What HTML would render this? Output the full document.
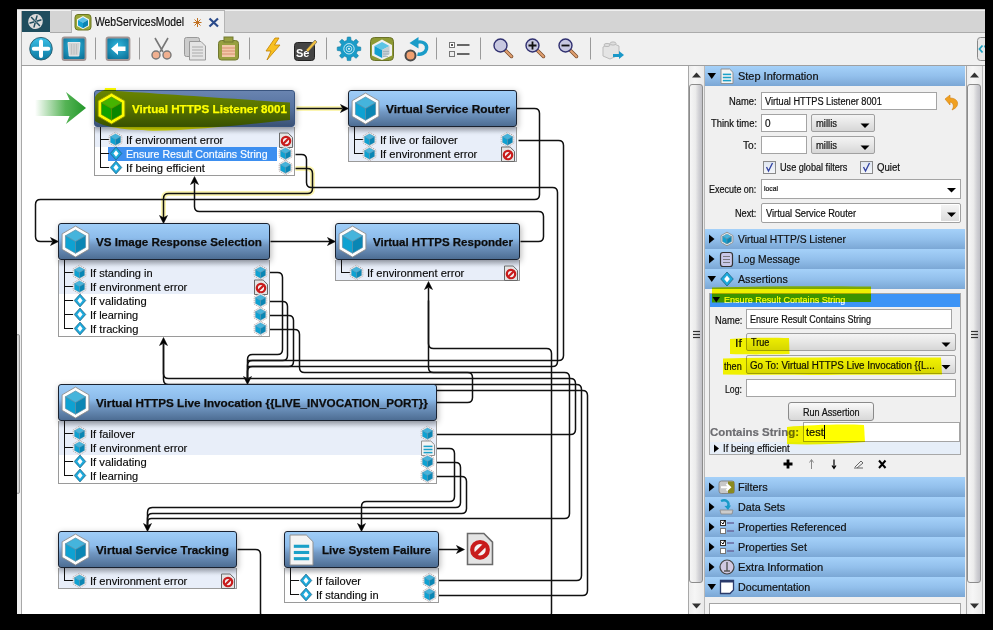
<!DOCTYPE html><html><head><meta charset="utf-8"><style>html,body{margin:0;padding:0;width:993px;height:630px;overflow:hidden;background:#000;}.a{position:absolute;}.t{position:absolute;white-space:nowrap;font-family:"Liberation Sans",sans-serif;transform-origin:0 50%;}#root{position:relative;width:993px;height:630px;overflow:hidden;background:#000;font-family:"Liberation Sans",sans-serif;}</style></head><body><div id="root">
<div class="a" style="left:17px;top:9px;width:968px;height:605px;background:#f0f0f0;border-top:1px solid #c4c4c4;box-sizing:border-box;"></div>
<div class="a" style="left:50px;top:11px;width:935px;height:22px;background:#d4d4d4;border-bottom:1px solid #ababab;box-sizing:border-box;"></div>
<div class="a" style="left:22px;top:11px;width:28px;height:21px;background:#1f4d5e;"></div>
<div class="a" style="left:21px;top:11px;width:1px;height:603px;background:#a8a8a8;"></div>
<div class="a" style="left:16px;top:334px;width:4px;height:160px;background:linear-gradient(90deg,#e4e4e4,#cfcfcf);border:1px solid #9a9a9a;border-radius:3px;box-sizing:border-box;"></div>
<div class="a" style="left:71px;top:10px;width:154px;height:23px;background:#f0f0f0;border:1px solid #b4b4b4;border-bottom:none;box-sizing:border-box;"></div>
<div class="a" style="left:21px;top:65px;width:964px;height:1px;background:#a0a0a0;"></div>
<div class="a" style="left:22px;top:66px;width:666px;height:548px;background:#fff;"></div>
<svg class="a" style="left:22px;top:66px" width="666" height="548" viewBox="22 66 666 548"><path d="M296.5,108.5 L342.5,108.5" fill="none" stroke="#fbf5b0" stroke-width="5" /><path d="M295.5,168.5 L307.50,168.50 Q312.5,168.5 312.50,173.50 L312.50,188.50 Q312.5,193.5 307.50,193.50 L168.50,193.50 Q163.5,193.5 163.50,198.50 L163.5,218.5" fill="none" stroke="#fbf5b0" stroke-width="5" /><path d="M295.5,154.5 L301.50,154.50 Q306.5,154.5 306.50,159.50 L306.50,182.50 Q306.5,187.5 311.50,187.50 L552.50,187.50 Q557.5,187.5 557.50,192.50 L557.50,361.50 Q557.5,366.5 552.50,366.50 L252.50,366.50 Q247.5,366.5 247.50,371.50 L247.5,380.5" fill="none" stroke="#111" stroke-width="1.5"/><polygon points="247.5,384.5 243.5,376.5 247.5,378.74 251.5,376.5" fill="#000" stroke="#000" stroke-width="0.5" stroke-linejoin="round"/><path d="M516.5,108.5 L534.50,108.50 Q539.5,108.5 539.50,113.50 L539.50,194.50 Q539.5,199.5 534.50,199.50 L40.50,199.50 Q35.5,199.5 35.50,204.50 L35.50,236.50 Q35.5,241.5 40.50,241.50 L52.5,241.5" fill="none" stroke="#111" stroke-width="1.5"/><polygon points="58.5,241.5 50.5,237.5 52.74,241.5 50.5,245.5" fill="#000" stroke="#000" stroke-width="0.5" stroke-linejoin="round"/><path d="M518.5,140.5 L558.50,140.50 Q563.5,140.5 563.50,145.50 L563.50,355.50 Q563.5,360.5 558.50,360.50 L252.50,360.50 Q247.5,360.5 247.50,365.50 L247.5,380.5" fill="none" stroke="#111" stroke-width="1.5"/><path d="M520.5,241.5 L538.50,241.50 Q543.5,241.5 543.50,236.50 L543.50,216.50 Q543.5,211.5 538.50,211.50 L199.50,211.50 Q194.5,211.5 194.50,206.50 L194.5,182.5" fill="none" stroke="#111" stroke-width="1.5"/><polygon points="194.5,176.5 190.5,184.5 194.5,182.26 198.5,184.5" fill="#000" stroke="#000" stroke-width="0.5" stroke-linejoin="round"/><path d="M270.5,241.5 L330.5,241.5" fill="none" stroke="#111" stroke-width="1.5"/><polygon points="335.5,241.5 327.5,237.5 329.74,241.5 327.5,245.5" fill="#000" stroke="#000" stroke-width="0.5" stroke-linejoin="round"/><path d="M268.5,272.5 L277.50,272.50 Q282.5,272.5 282.50,277.50 L282.50,349.50 Q282.5,354.5 277.50,354.50 L252.50,354.50 Q247.5,354.5 247.50,359.50 L247.5,380.5" fill="none" stroke="#111" stroke-width="1.5"/><path d="M268.5,301.5 L282.50,301.50 Q287.5,301.5 287.50,306.50 L287.50,355.50 Q287.5,360.5 282.50,360.50 L247.5,360.5" fill="none" stroke="#111" stroke-width="1.5"/><path d="M268.5,315.5 L288.50,315.50 Q293.5,315.5 293.50,320.50 L293.50,361.50 Q293.5,366.5 288.50,366.50 L247.5,366.5" fill="none" stroke="#111" stroke-width="1.5"/><path d="M268.5,329.5 L294.50,329.50 Q299.5,329.5 299.50,334.50 L299.50,367.50 Q299.5,372.5 304.50,372.50 L564.50,372.50 Q569.5,372.5 569.50,377.50 L569.50,513.50 Q569.5,518.5 564.50,518.50 L151.50,518.50 Q147.5,518.5 147.50,522.50 L147.5,526.5" fill="none" stroke="#111" stroke-width="1.5"/><polygon points="147.5,531.5 143.5,523.5 147.5,525.74 151.5,523.5" fill="#000" stroke="#000" stroke-width="0.5" stroke-linejoin="round"/><path d="M436.5,402.5 L467.50,402.50 Q472.5,402.5 472.50,397.50 L472.50,377.50 Q472.5,372.5 467.50,372.50 L433.50,372.50 Q428.5,372.5 428.50,367.50 L428.5,287.5" fill="none" stroke="#111" stroke-width="1.5"/><polygon points="428.5,281.5 424.5,289.5 428.5,287.26 432.5,289.5" fill="#000" stroke="#000" stroke-width="0.5" stroke-linejoin="round"/><path d="M237.5,549.5 L255.50,549.50 Q260.5,549.5 260.50,554.50 L260.50,612.50 Q260.5,617.5 265.50,617.50 L546.50,617.50 Q551.5,617.5 551.50,612.50 L551.50,353.50 Q551.5,348.5 546.50,348.50 L433.50,348.50 Q428.5,348.5 428.50,343.50 L428.5,300.5" fill="none" stroke="#111" stroke-width="1.5"/><path d="M436.5,434.5 L570.50,434.50 Q575.5,434.5 575.50,429.50 L575.50,383.50 Q575.5,378.5 570.50,378.50 L168.50,378.50 Q163.5,378.5 163.50,373.50 L163.5,343.5" fill="none" stroke="#111" stroke-width="1.5"/><polygon points="163.5,337.5 159.5,345.5 163.5,343.26 167.5,345.5" fill="#000" stroke="#000" stroke-width="0.5" stroke-linejoin="round"/><path d="M436.5,448.5 L449.50,448.50 Q454.5,448.5 454.50,453.50 L454.50,496.50 Q454.5,501.5 449.50,501.50 L366.50,501.50 Q361.5,501.5 361.50,506.50 L361.5,526.5" fill="none" stroke="#111" stroke-width="1.5"/><polygon points="361.5,531.5 357.5,523.5 361.5,525.74 365.5,523.5" fill="#000" stroke="#000" stroke-width="0.5" stroke-linejoin="round"/><path d="M436.5,462.5 L455.50,462.50 Q460.5,462.5 460.50,467.50 L460.50,502.50 Q460.5,507.5 455.50,507.50 L152.50,507.50 Q147.5,507.5 147.50,512.50 L147.5,526.5" fill="none" stroke="#111" stroke-width="1.5"/><path d="M436.5,476.5 L461.50,476.50 Q466.5,476.5 466.50,481.50 L466.50,508.50 Q466.5,513.5 461.50,513.50 L152.50,513.50 Q147.5,513.5 147.50,518.50 L147.5,526.5" fill="none" stroke="#111" stroke-width="1.5"/><path d="M438.5,580.5 L576.50,580.50 Q581.5,580.5 581.50,575.50 L581.50,389.50 Q581.5,384.5 576.50,384.50 L168.50,384.50 Q163.5,384.5 163.50,379.50 L163.5,343.5" fill="none" stroke="#111" stroke-width="1.5"/><path d="M438.5,595.5 L582.50,595.50 Q587.5,595.5 587.50,590.50 L587.50,395.50 Q587.5,390.5 582.50,390.50 L436.5,390.5" fill="none" stroke="#111" stroke-width="1.5"/><path d="M438.5,549.5 L458.5,549.5" fill="none" stroke="#111" stroke-width="1.5"/><polygon points="464.5,549.5 456.5,545.5 458.74,549.5 456.5,553.5" fill="#000" stroke="#000" stroke-width="0.5" stroke-linejoin="round"/><path d="M296.5,108.5 L342.5,108.5" fill="none" stroke="#111" stroke-width="1.5"/><polygon points="348.5,108.5 340.5,104.5 342.74,108.5 340.5,112.5" fill="#000" stroke="#000" stroke-width="0.5" stroke-linejoin="round"/><path d="M295.5,168.5 L307.50,168.50 Q312.5,168.5 312.50,173.50 L312.50,188.50 Q312.5,193.5 307.50,193.50 L168.50,193.50 Q163.5,193.5 163.50,198.50 L163.5,218.5" fill="none" stroke="#111" stroke-width="1.5"/><polygon points="163.5,223.5 159.5,215.5 163.5,217.74 167.5,215.5" fill="#000" stroke="#000" stroke-width="0.5" stroke-linejoin="round"/></svg>
<svg class="a" style="left:0;top:0" width="993" height="630"><defs><linearGradient id="ga" x1="0" x2="1"><stop offset="0" stop-color="#2aa02a" stop-opacity="0"/><stop offset="0.6" stop-color="#2aa02a" stop-opacity="0.8"/><stop offset="1" stop-color="#22962a"/></linearGradient></defs><polygon points="35,100 69.6,100 66,92 86,108 66,124 69.6,116 35,116" fill="url(#ga)"/></svg>
<div class="a" style="left:94px;top:127px;width:201px;height:49.0px;background:#fff;border:1px solid #9a9a9a;border-top:none;box-sizing:border-box;"></div>
<div class="a" style="left:95px;top:127px;width:199px;height:19.5px;background:#e8eef9;"></div>
<div class="a" style="left:95px;top:127px;width:199px;height:7px;background:linear-gradient(rgba(110,120,140,0.32),rgba(110,120,140,0));"></div>
<div class="a" style="left:94px;top:90px;width:201px;height:37px;background:linear-gradient(#6984b0 0%,#5874a2 45%,#3a5276 100%);border:1px solid #3a5580;border-radius:3px;box-sizing:border-box;box-shadow:1px 2px 6px rgba(0,0,0,0.3);"></div>
<div class="t" style="left:132px;top:101.90px;font-size:11.65px;line-height:13.40px;font-weight:bold;color:#fff;transform:scaleX(0.9989);-webkit-text-stroke:0.25px #fff;">Virtual HTTPS Listener 8001</div>
<div class="t" style="left:126px;top:133.78px;font-size:11px;line-height:12.65px;color:#0a0a0a;transform:scaleX(1.0138);-webkit-text-stroke:0.15px #0a0a0a;">If environment error</div>
<div class="a" style="left:108px;top:147.0px;width:169px;height:14px;background:#3d8ff0;"></div>
<div class="t" style="left:126px;top:147.78px;font-size:11px;line-height:12.65px;color:#fff;transform:scaleX(0.9610);-webkit-text-stroke:0.15px #fff;">Ensure Result Contains String</div>
<div class="t" style="left:126px;top:161.78px;font-size:11px;line-height:12.65px;color:#0a0a0a;transform:scaleX(1.0255);-webkit-text-stroke:0.15px #0a0a0a;">If being efficient</div>
<div class="a" style="left:348px;top:127px;width:169px;height:35.0px;background:#fff;border:1px solid #9a9a9a;border-top:none;box-sizing:border-box;"></div>
<div class="a" style="left:349px;top:127px;width:167px;height:19.5px;background:#e8eef9;"></div>
<div class="a" style="left:349px;top:146.5px;width:167px;height:14.0px;background:#e8eef9;"></div>
<div class="a" style="left:349px;top:127px;width:167px;height:7px;background:linear-gradient(rgba(110,120,140,0.32),rgba(110,120,140,0));"></div>
<div class="a" style="left:348px;top:90px;width:169px;height:37px;background:linear-gradient(#9fcdf7 0%,#8dbceb 40%,#7298c3 60%,#4d6d93 100%);border:1px solid #1a2230;border-radius:3px;box-sizing:border-box;box-shadow:1px 2px 6px rgba(0,0,0,0.3);"></div>
<div class="t" style="left:386px;top:101.90px;font-size:11.65px;line-height:13.40px;font-weight:bold;color:#0c0c0c;transform:scaleX(1.0205);-webkit-text-stroke:0.25px #0c0c0c;">Virtual Service Router</div>
<div class="t" style="left:380px;top:133.78px;font-size:11px;line-height:12.65px;color:#0a0a0a;transform:scaleX(1.0100);-webkit-text-stroke:0.15px #0a0a0a;">If live or failover</div>
<div class="t" style="left:380px;top:147.78px;font-size:11px;line-height:12.65px;color:#0a0a0a;transform:scaleX(1.0138);-webkit-text-stroke:0.15px #0a0a0a;">If environment error</div>
<div class="a" style="left:58px;top:260px;width:212px;height:77.0px;background:#fff;border:1px solid #9a9a9a;border-top:none;box-sizing:border-box;"></div>
<div class="a" style="left:59px;top:260px;width:210px;height:19.5px;background:#e8eef9;"></div>
<div class="a" style="left:59px;top:279.5px;width:210px;height:14.0px;background:#e8eef9;"></div>
<div class="a" style="left:59px;top:260px;width:210px;height:7px;background:linear-gradient(rgba(110,120,140,0.32),rgba(110,120,140,0));"></div>
<div class="a" style="left:58px;top:223px;width:212px;height:37px;background:linear-gradient(#9fcdf7 0%,#8dbceb 40%,#7298c3 60%,#4d6d93 100%);border:1px solid #1a2230;border-radius:3px;box-sizing:border-box;box-shadow:1px 2px 6px rgba(0,0,0,0.3);"></div>
<div class="t" style="left:96px;top:234.90px;font-size:11.65px;line-height:13.40px;font-weight:bold;color:#0c0c0c;transform:scaleX(0.9977);-webkit-text-stroke:0.25px #0c0c0c;">VS Image Response Selection</div>
<div class="t" style="left:90px;top:266.78px;font-size:11px;line-height:12.65px;color:#0a0a0a;transform:scaleX(1.0037);-webkit-text-stroke:0.15px #0a0a0a;">If standing in</div>
<div class="t" style="left:90px;top:280.78px;font-size:11px;line-height:12.65px;color:#0a0a0a;transform:scaleX(1.0138);-webkit-text-stroke:0.15px #0a0a0a;">If environment error</div>
<div class="t" style="left:90px;top:294.78px;font-size:11px;line-height:12.65px;color:#0a0a0a;transform:scaleX(1.0190);-webkit-text-stroke:0.15px #0a0a0a;">If validating</div>
<div class="t" style="left:90px;top:308.78px;font-size:11px;line-height:12.65px;color:#0a0a0a;transform:scaleX(0.9979);-webkit-text-stroke:0.15px #0a0a0a;">If learning</div>
<div class="t" style="left:90px;top:322.78px;font-size:11px;line-height:12.65px;color:#0a0a0a;transform:scaleX(1.0151);-webkit-text-stroke:0.15px #0a0a0a;">If tracking</div>
<div class="a" style="left:335px;top:260px;width:185px;height:21.0px;background:#fff;border:1px solid #9a9a9a;border-top:none;box-sizing:border-box;"></div>
<div class="a" style="left:336px;top:260px;width:183px;height:19.5px;background:#e8eef9;"></div>
<div class="a" style="left:336px;top:260px;width:183px;height:7px;background:linear-gradient(rgba(110,120,140,0.32),rgba(110,120,140,0));"></div>
<div class="a" style="left:335px;top:223px;width:185px;height:37px;background:linear-gradient(#9fcdf7 0%,#8dbceb 40%,#7298c3 60%,#4d6d93 100%);border:1px solid #1a2230;border-radius:3px;box-sizing:border-box;box-shadow:1px 2px 6px rgba(0,0,0,0.3);"></div>
<div class="t" style="left:373px;top:234.90px;font-size:11.65px;line-height:13.40px;font-weight:bold;color:#0c0c0c;transform:scaleX(0.9891);-webkit-text-stroke:0.25px #0c0c0c;">Virtual HTTPS Responder</div>
<div class="t" style="left:367px;top:266.78px;font-size:11px;line-height:12.65px;color:#0a0a0a;transform:scaleX(1.0138);-webkit-text-stroke:0.15px #0a0a0a;">If environment error</div>
<div class="a" style="left:58px;top:421px;width:379px;height:63.0px;background:#fff;border:1px solid #9a9a9a;border-top:none;box-sizing:border-box;"></div>
<div class="a" style="left:59px;top:421px;width:377px;height:19.5px;background:#e8eef9;"></div>
<div class="a" style="left:59px;top:440.5px;width:377px;height:14.0px;background:#e8eef9;"></div>
<div class="a" style="left:59px;top:421px;width:377px;height:7px;background:linear-gradient(rgba(110,120,140,0.32),rgba(110,120,140,0));"></div>
<div class="a" style="left:58px;top:384px;width:379px;height:37px;background:linear-gradient(#9fcdf7 0%,#8dbceb 40%,#7298c3 60%,#4d6d93 100%);border:1px solid #1a2230;border-radius:3px;box-sizing:border-box;box-shadow:1px 2px 6px rgba(0,0,0,0.3);"></div>
<div class="t" style="left:96px;top:395.90px;font-size:11.65px;line-height:13.40px;font-weight:bold;color:#0c0c0c;transform:scaleX(1.0050);-webkit-text-stroke:0.25px #0c0c0c;">Virtual HTTPS Live Invocation {{LIVE_INVOCATION_PORT}}</div>
<div class="t" style="left:90px;top:427.78px;font-size:11px;line-height:12.65px;color:#0a0a0a;transform:scaleX(1.0100);-webkit-text-stroke:0.15px #0a0a0a;">If failover</div>
<div class="t" style="left:90px;top:441.78px;font-size:11px;line-height:12.65px;color:#0a0a0a;transform:scaleX(1.0138);-webkit-text-stroke:0.15px #0a0a0a;">If environment error</div>
<div class="t" style="left:90px;top:455.78px;font-size:11px;line-height:12.65px;color:#0a0a0a;transform:scaleX(1.0190);-webkit-text-stroke:0.15px #0a0a0a;">If validating</div>
<div class="t" style="left:90px;top:469.78px;font-size:11px;line-height:12.65px;color:#0a0a0a;transform:scaleX(0.9979);-webkit-text-stroke:0.15px #0a0a0a;">If learning</div>
<div class="a" style="left:58px;top:568px;width:179px;height:21.0px;background:#fff;border:1px solid #9a9a9a;border-top:none;box-sizing:border-box;"></div>
<div class="a" style="left:59px;top:568px;width:177px;height:19.5px;background:#e8eef9;"></div>
<div class="a" style="left:59px;top:568px;width:177px;height:7px;background:linear-gradient(rgba(110,120,140,0.32),rgba(110,120,140,0));"></div>
<div class="a" style="left:58px;top:531px;width:179px;height:37px;background:linear-gradient(#9fcdf7 0%,#8dbceb 40%,#7298c3 60%,#4d6d93 100%);border:1px solid #1a2230;border-radius:3px;box-sizing:border-box;box-shadow:1px 2px 6px rgba(0,0,0,0.3);"></div>
<div class="t" style="left:96px;top:542.90px;font-size:11.65px;line-height:13.40px;font-weight:bold;color:#0c0c0c;transform:scaleX(1.0085);-webkit-text-stroke:0.25px #0c0c0c;">Virtual Service Tracking</div>
<div class="t" style="left:90px;top:574.77px;font-size:11px;line-height:12.65px;color:#0a0a0a;transform:scaleX(1.0138);-webkit-text-stroke:0.15px #0a0a0a;">If environment error</div>
<div class="a" style="left:284px;top:568px;width:155px;height:35.0px;background:#fff;border:1px solid #9a9a9a;border-top:none;box-sizing:border-box;"></div>
<div class="a" style="left:285px;top:568px;width:153px;height:7px;background:linear-gradient(rgba(110,120,140,0.32),rgba(110,120,140,0));"></div>
<div class="a" style="left:284px;top:531px;width:155px;height:37px;background:linear-gradient(#9fcdf7 0%,#8dbceb 40%,#7298c3 60%,#4d6d93 100%);border:1px solid #1a2230;border-radius:3px;box-sizing:border-box;box-shadow:1px 2px 6px rgba(0,0,0,0.3);"></div>
<div class="t" style="left:322px;top:542.90px;font-size:11.65px;line-height:13.40px;font-weight:bold;color:#0c0c0c;transform:scaleX(0.9961);-webkit-text-stroke:0.25px #0c0c0c;">Live System Failure</div>
<div class="t" style="left:316px;top:574.77px;font-size:11px;line-height:12.65px;color:#0a0a0a;transform:scaleX(1.0100);-webkit-text-stroke:0.15px #0a0a0a;">If failover</div>
<div class="t" style="left:316px;top:588.77px;font-size:11px;line-height:12.65px;color:#0a0a0a;transform:scaleX(1.0037);-webkit-text-stroke:0.15px #0a0a0a;">If standing in</div>
<svg class="a" style="left:0;top:0" width="993" height="630"><polygon points="111.50,93.10 124.90,100.85 124.90,116.35 111.50,124.10 98.10,116.35 98.10,100.85" fill="#fdfdfd" stroke="#8c8c8c" stroke-width="0.9"/><polygon points="111.50,96.97 121.55,102.79 111.50,108.60 101.45,102.79" fill="#45b4dc" stroke="#5a8ea8" stroke-width="0.7"/><polygon points="101.45,102.79 111.50,108.60 111.50,120.22 101.45,114.41" fill="#0ea2d2" stroke="#5a8ea8" stroke-width="0.7"/><polygon points="121.55,102.79 111.50,108.60 111.50,120.22 121.55,114.41" fill="#0a86b4" stroke="#5a8ea8" stroke-width="0.7"/><line x1="100.5" y1="127" x2="100.5" y2="168.0" stroke="#111" stroke-width="1"/><line x1="100.5" y1="139.5" x2="109" y2="139.5" stroke="#111" stroke-width="1"/><polygon points="115.50,132.22 121.80,135.86 121.80,143.14 115.50,146.78 109.20,143.14 109.20,135.86" fill="#fbfbfb" stroke="#a89898" stroke-width="0.8" stroke-dasharray="1.2 0.8"/><polygon points="115.50,133.67 120.54,136.59 115.50,139.50 110.46,136.59" fill="#45b4dc" stroke="#5a8ea8" stroke-width="0.4"/><polygon points="110.46,136.59 115.50,139.50 115.50,145.33 110.46,142.41" fill="#0ea2d2" stroke="#5a8ea8" stroke-width="0.4"/><polygon points="120.54,136.59 115.50,139.50 115.50,145.33 120.54,142.41" fill="#0a86b4" stroke="#5a8ea8" stroke-width="0.4"/><path d="M279.5,133.0 H288.1 L292.5,137.4 V147.5 H279.5 Z" fill="#e4e4e4" stroke="#6a6a6a" stroke-width="1.00"/><circle cx="286.0" cy="141.05" r="4.20" fill="#f4f4f4" stroke="#c81c1c" stroke-width="2.24"/><line x1="282.98" y1="144.07" x2="289.02" y2="138.03" stroke="#c81c1c" stroke-width="2.24"/><line x1="100.5" y1="153.5" x2="109" y2="153.5" stroke="#111" stroke-width="1"/><polygon points="116,147.1 121.76,153.5 116,159.9 110.24,153.5" fill="#1eaadc" stroke="#1a5a7a" stroke-width="0.7"/><polygon points="116,150.3 118.56,153.5 116,156.7 113.44,153.5" fill="#fff"/><polygon points="285.50,146.22 291.80,149.86 291.80,157.14 285.50,160.78 279.20,157.14 279.20,149.86" fill="#fbfbfb" stroke="#a89898" stroke-width="0.8" stroke-dasharray="1.2 0.8"/><polygon points="285.50,147.67 290.54,150.59 285.50,153.50 280.46,150.59" fill="#45b4dc" stroke="#5a8ea8" stroke-width="0.4"/><polygon points="280.46,150.59 285.50,153.50 285.50,159.33 280.46,156.41" fill="#0ea2d2" stroke="#5a8ea8" stroke-width="0.4"/><polygon points="290.54,150.59 285.50,153.50 285.50,159.33 290.54,156.41" fill="#0a86b4" stroke="#5a8ea8" stroke-width="0.4"/><line x1="100.5" y1="167.5" x2="109" y2="167.5" stroke="#111" stroke-width="1"/><polygon points="116,161.1 121.76,167.5 116,173.9 110.24,167.5" fill="#1eaadc" stroke="#1a5a7a" stroke-width="0.7"/><polygon points="116,164.3 118.56,167.5 116,170.7 113.44,167.5" fill="#fff"/><polygon points="285.50,160.22 291.80,163.86 291.80,171.14 285.50,174.78 279.20,171.14 279.20,163.86" fill="#fbfbfb" stroke="#a89898" stroke-width="0.8" stroke-dasharray="1.2 0.8"/><polygon points="285.50,161.67 290.54,164.59 285.50,167.50 280.46,164.59" fill="#45b4dc" stroke="#5a8ea8" stroke-width="0.4"/><polygon points="280.46,164.59 285.50,167.50 285.50,173.33 280.46,170.41" fill="#0ea2d2" stroke="#5a8ea8" stroke-width="0.4"/><polygon points="290.54,164.59 285.50,167.50 285.50,173.33 290.54,170.41" fill="#0a86b4" stroke="#5a8ea8" stroke-width="0.4"/><polygon points="365.50,93.10 378.90,100.85 378.90,116.35 365.50,124.10 352.10,116.35 352.10,100.85" fill="#fdfdfd" stroke="#8c8c8c" stroke-width="0.9"/><polygon points="365.50,96.97 375.55,102.79 365.50,108.60 355.45,102.79" fill="#45b4dc" stroke="#5a8ea8" stroke-width="0.7"/><polygon points="355.45,102.79 365.50,108.60 365.50,120.22 355.45,114.41" fill="#0ea2d2" stroke="#5a8ea8" stroke-width="0.7"/><polygon points="375.55,102.79 365.50,108.60 365.50,120.22 375.55,114.41" fill="#0a86b4" stroke="#5a8ea8" stroke-width="0.7"/><line x1="354.5" y1="127" x2="354.5" y2="154.0" stroke="#111" stroke-width="1"/><line x1="354.5" y1="139.5" x2="363" y2="139.5" stroke="#111" stroke-width="1"/><polygon points="369.50,132.22 375.80,135.86 375.80,143.14 369.50,146.78 363.20,143.14 363.20,135.86" fill="#fbfbfb" stroke="#a89898" stroke-width="0.8" stroke-dasharray="1.2 0.8"/><polygon points="369.50,133.67 374.54,136.59 369.50,139.50 364.46,136.59" fill="#45b4dc" stroke="#5a8ea8" stroke-width="0.4"/><polygon points="364.46,136.59 369.50,139.50 369.50,145.33 364.46,142.41" fill="#0ea2d2" stroke="#5a8ea8" stroke-width="0.4"/><polygon points="374.54,136.59 369.50,139.50 369.50,145.33 374.54,142.41" fill="#0a86b4" stroke="#5a8ea8" stroke-width="0.4"/><polygon points="507.50,132.22 513.80,135.86 513.80,143.14 507.50,146.78 501.20,143.14 501.20,135.86" fill="#fbfbfb" stroke="#a89898" stroke-width="0.8" stroke-dasharray="1.2 0.8"/><polygon points="507.50,133.67 512.54,136.59 507.50,139.50 502.46,136.59" fill="#45b4dc" stroke="#5a8ea8" stroke-width="0.4"/><polygon points="502.46,136.59 507.50,139.50 507.50,145.33 502.46,142.41" fill="#0ea2d2" stroke="#5a8ea8" stroke-width="0.4"/><polygon points="512.54,136.59 507.50,139.50 507.50,145.33 512.54,142.41" fill="#0a86b4" stroke="#5a8ea8" stroke-width="0.4"/><line x1="354.5" y1="153.5" x2="363" y2="153.5" stroke="#111" stroke-width="1"/><polygon points="369.50,146.22 375.80,149.86 375.80,157.14 369.50,160.78 363.20,157.14 363.20,149.86" fill="#fbfbfb" stroke="#a89898" stroke-width="0.8" stroke-dasharray="1.2 0.8"/><polygon points="369.50,147.67 374.54,150.59 369.50,153.50 364.46,150.59" fill="#45b4dc" stroke="#5a8ea8" stroke-width="0.4"/><polygon points="364.46,150.59 369.50,153.50 369.50,159.33 364.46,156.41" fill="#0ea2d2" stroke="#5a8ea8" stroke-width="0.4"/><polygon points="374.54,150.59 369.50,153.50 369.50,159.33 374.54,156.41" fill="#0a86b4" stroke="#5a8ea8" stroke-width="0.4"/><path d="M501.5,147.0 H510.1 L514.5,151.4 V161.5 H501.5 Z" fill="#e4e4e4" stroke="#6a6a6a" stroke-width="1.00"/><circle cx="508.0" cy="155.05" r="4.20" fill="#f4f4f4" stroke="#c81c1c" stroke-width="2.24"/><line x1="504.98" y1="158.07" x2="511.02" y2="152.03" stroke="#c81c1c" stroke-width="2.24"/><polygon points="75.50,226.10 88.90,233.85 88.90,249.35 75.50,257.10 62.10,249.35 62.10,233.85" fill="#fdfdfd" stroke="#8c8c8c" stroke-width="0.9"/><polygon points="75.50,229.97 85.55,235.79 75.50,241.60 65.45,235.79" fill="#45b4dc" stroke="#5a8ea8" stroke-width="0.7"/><polygon points="65.45,235.79 75.50,241.60 75.50,253.22 65.45,247.41" fill="#0ea2d2" stroke="#5a8ea8" stroke-width="0.7"/><polygon points="85.55,235.79 75.50,241.60 75.50,253.22 85.55,247.41" fill="#0a86b4" stroke="#5a8ea8" stroke-width="0.7"/><line x1="64.5" y1="260" x2="64.5" y2="329.0" stroke="#111" stroke-width="1"/><line x1="64.5" y1="272.5" x2="73" y2="272.5" stroke="#111" stroke-width="1"/><polygon points="79.50,265.21 85.80,268.86 85.80,276.14 79.50,279.79 73.20,276.14 73.20,268.86" fill="#fbfbfb" stroke="#a89898" stroke-width="0.8" stroke-dasharray="1.2 0.8"/><polygon points="79.50,266.67 84.54,269.59 79.50,272.50 74.46,269.59" fill="#45b4dc" stroke="#5a8ea8" stroke-width="0.4"/><polygon points="74.46,269.59 79.50,272.50 79.50,278.33 74.46,275.41" fill="#0ea2d2" stroke="#5a8ea8" stroke-width="0.4"/><polygon points="84.54,269.59 79.50,272.50 79.50,278.33 84.54,275.41" fill="#0a86b4" stroke="#5a8ea8" stroke-width="0.4"/><polygon points="260.50,265.21 266.80,268.86 266.80,276.14 260.50,279.79 254.20,276.14 254.20,268.86" fill="#fbfbfb" stroke="#a89898" stroke-width="0.8" stroke-dasharray="1.2 0.8"/><polygon points="260.50,266.67 265.54,269.59 260.50,272.50 255.46,269.59" fill="#45b4dc" stroke="#5a8ea8" stroke-width="0.4"/><polygon points="255.46,269.59 260.50,272.50 260.50,278.33 255.46,275.41" fill="#0ea2d2" stroke="#5a8ea8" stroke-width="0.4"/><polygon points="265.54,269.59 260.50,272.50 260.50,278.33 265.54,275.41" fill="#0a86b4" stroke="#5a8ea8" stroke-width="0.4"/><line x1="64.5" y1="286.5" x2="73" y2="286.5" stroke="#111" stroke-width="1"/><polygon points="79.50,279.21 85.80,282.86 85.80,290.14 79.50,293.79 73.20,290.14 73.20,282.86" fill="#fbfbfb" stroke="#a89898" stroke-width="0.8" stroke-dasharray="1.2 0.8"/><polygon points="79.50,280.67 84.54,283.59 79.50,286.50 74.46,283.59" fill="#45b4dc" stroke="#5a8ea8" stroke-width="0.4"/><polygon points="74.46,283.59 79.50,286.50 79.50,292.33 74.46,289.41" fill="#0ea2d2" stroke="#5a8ea8" stroke-width="0.4"/><polygon points="84.54,283.59 79.50,286.50 79.50,292.33 84.54,289.41" fill="#0a86b4" stroke="#5a8ea8" stroke-width="0.4"/><path d="M254.5,280.0 H263.1 L267.5,284.4 V294.5 H254.5 Z" fill="#e4e4e4" stroke="#6a6a6a" stroke-width="1.00"/><circle cx="261.0" cy="288.05" r="4.20" fill="#f4f4f4" stroke="#c81c1c" stroke-width="2.24"/><line x1="257.98" y1="291.07" x2="264.02" y2="285.03" stroke="#c81c1c" stroke-width="2.24"/><line x1="64.5" y1="300.5" x2="73" y2="300.5" stroke="#111" stroke-width="1"/><polygon points="80,294.1 85.76,300.5 80,306.9 74.24,300.5" fill="#1eaadc" stroke="#1a5a7a" stroke-width="0.7"/><polygon points="80,297.3 82.56,300.5 80,303.7 77.44,300.5" fill="#fff"/><polygon points="260.50,293.21 266.80,296.86 266.80,304.14 260.50,307.79 254.20,304.14 254.20,296.86" fill="#fbfbfb" stroke="#a89898" stroke-width="0.8" stroke-dasharray="1.2 0.8"/><polygon points="260.50,294.67 265.54,297.59 260.50,300.50 255.46,297.59" fill="#45b4dc" stroke="#5a8ea8" stroke-width="0.4"/><polygon points="255.46,297.59 260.50,300.50 260.50,306.33 255.46,303.41" fill="#0ea2d2" stroke="#5a8ea8" stroke-width="0.4"/><polygon points="265.54,297.59 260.50,300.50 260.50,306.33 265.54,303.41" fill="#0a86b4" stroke="#5a8ea8" stroke-width="0.4"/><line x1="64.5" y1="314.5" x2="73" y2="314.5" stroke="#111" stroke-width="1"/><polygon points="80,308.1 85.76,314.5 80,320.9 74.24,314.5" fill="#1eaadc" stroke="#1a5a7a" stroke-width="0.7"/><polygon points="80,311.3 82.56,314.5 80,317.7 77.44,314.5" fill="#fff"/><polygon points="260.50,307.21 266.80,310.86 266.80,318.14 260.50,321.79 254.20,318.14 254.20,310.86" fill="#fbfbfb" stroke="#a89898" stroke-width="0.8" stroke-dasharray="1.2 0.8"/><polygon points="260.50,308.67 265.54,311.59 260.50,314.50 255.46,311.59" fill="#45b4dc" stroke="#5a8ea8" stroke-width="0.4"/><polygon points="255.46,311.59 260.50,314.50 260.50,320.33 255.46,317.41" fill="#0ea2d2" stroke="#5a8ea8" stroke-width="0.4"/><polygon points="265.54,311.59 260.50,314.50 260.50,320.33 265.54,317.41" fill="#0a86b4" stroke="#5a8ea8" stroke-width="0.4"/><line x1="64.5" y1="328.5" x2="73" y2="328.5" stroke="#111" stroke-width="1"/><polygon points="80,322.1 85.76,328.5 80,334.9 74.24,328.5" fill="#1eaadc" stroke="#1a5a7a" stroke-width="0.7"/><polygon points="80,325.3 82.56,328.5 80,331.7 77.44,328.5" fill="#fff"/><polygon points="260.50,321.21 266.80,324.86 266.80,332.14 260.50,335.79 254.20,332.14 254.20,324.86" fill="#fbfbfb" stroke="#a89898" stroke-width="0.8" stroke-dasharray="1.2 0.8"/><polygon points="260.50,322.67 265.54,325.59 260.50,328.50 255.46,325.59" fill="#45b4dc" stroke="#5a8ea8" stroke-width="0.4"/><polygon points="255.46,325.59 260.50,328.50 260.50,334.33 255.46,331.41" fill="#0ea2d2" stroke="#5a8ea8" stroke-width="0.4"/><polygon points="265.54,325.59 260.50,328.50 260.50,334.33 265.54,331.41" fill="#0a86b4" stroke="#5a8ea8" stroke-width="0.4"/><polygon points="352.50,226.10 365.90,233.85 365.90,249.35 352.50,257.10 339.10,249.35 339.10,233.85" fill="#fdfdfd" stroke="#8c8c8c" stroke-width="0.9"/><polygon points="352.50,229.97 362.55,235.79 352.50,241.60 342.45,235.79" fill="#45b4dc" stroke="#5a8ea8" stroke-width="0.7"/><polygon points="342.45,235.79 352.50,241.60 352.50,253.22 342.45,247.41" fill="#0ea2d2" stroke="#5a8ea8" stroke-width="0.7"/><polygon points="362.55,235.79 352.50,241.60 352.50,253.22 362.55,247.41" fill="#0a86b4" stroke="#5a8ea8" stroke-width="0.7"/><line x1="341.5" y1="260" x2="341.5" y2="273.0" stroke="#111" stroke-width="1"/><line x1="341.5" y1="272.5" x2="350" y2="272.5" stroke="#111" stroke-width="1"/><polygon points="356.50,265.21 362.80,268.86 362.80,276.14 356.50,279.79 350.20,276.14 350.20,268.86" fill="#fbfbfb" stroke="#a89898" stroke-width="0.8" stroke-dasharray="1.2 0.8"/><polygon points="356.50,266.67 361.54,269.59 356.50,272.50 351.46,269.59" fill="#45b4dc" stroke="#5a8ea8" stroke-width="0.4"/><polygon points="351.46,269.59 356.50,272.50 356.50,278.33 351.46,275.41" fill="#0ea2d2" stroke="#5a8ea8" stroke-width="0.4"/><polygon points="361.54,269.59 356.50,272.50 356.50,278.33 361.54,275.41" fill="#0a86b4" stroke="#5a8ea8" stroke-width="0.4"/><path d="M504.5,266.0 H513.1 L517.5,270.4 V280.5 H504.5 Z" fill="#e4e4e4" stroke="#6a6a6a" stroke-width="1.00"/><circle cx="511.0" cy="274.05" r="4.20" fill="#f4f4f4" stroke="#c81c1c" stroke-width="2.24"/><line x1="507.98" y1="277.07" x2="514.02" y2="271.03" stroke="#c81c1c" stroke-width="2.24"/><polygon points="75.50,387.10 88.90,394.85 88.90,410.35 75.50,418.10 62.10,410.35 62.10,394.85" fill="#fdfdfd" stroke="#8c8c8c" stroke-width="0.9"/><polygon points="75.50,390.98 85.55,396.79 75.50,402.60 65.45,396.79" fill="#45b4dc" stroke="#5a8ea8" stroke-width="0.7"/><polygon points="65.45,396.79 75.50,402.60 75.50,414.23 65.45,408.41" fill="#0ea2d2" stroke="#5a8ea8" stroke-width="0.7"/><polygon points="85.55,396.79 75.50,402.60 75.50,414.23 85.55,408.41" fill="#0a86b4" stroke="#5a8ea8" stroke-width="0.7"/><line x1="64.5" y1="421" x2="64.5" y2="476.0" stroke="#111" stroke-width="1"/><line x1="64.5" y1="433.5" x2="73" y2="433.5" stroke="#111" stroke-width="1"/><polygon points="79.50,426.21 85.80,429.86 85.80,437.14 79.50,440.79 73.20,437.14 73.20,429.86" fill="#fbfbfb" stroke="#a89898" stroke-width="0.8" stroke-dasharray="1.2 0.8"/><polygon points="79.50,427.67 84.54,430.59 79.50,433.50 74.46,430.59" fill="#45b4dc" stroke="#5a8ea8" stroke-width="0.4"/><polygon points="74.46,430.59 79.50,433.50 79.50,439.33 74.46,436.41" fill="#0ea2d2" stroke="#5a8ea8" stroke-width="0.4"/><polygon points="84.54,430.59 79.50,433.50 79.50,439.33 84.54,436.41" fill="#0a86b4" stroke="#5a8ea8" stroke-width="0.4"/><polygon points="427.50,426.21 433.80,429.86 433.80,437.14 427.50,440.79 421.20,437.14 421.20,429.86" fill="#fbfbfb" stroke="#a89898" stroke-width="0.8" stroke-dasharray="1.2 0.8"/><polygon points="427.50,427.67 432.54,430.59 427.50,433.50 422.46,430.59" fill="#45b4dc" stroke="#5a8ea8" stroke-width="0.4"/><polygon points="422.46,430.59 427.50,433.50 427.50,439.33 422.46,436.41" fill="#0ea2d2" stroke="#5a8ea8" stroke-width="0.4"/><polygon points="432.54,430.59 427.50,433.50 427.50,439.33 432.54,436.41" fill="#0a86b4" stroke="#5a8ea8" stroke-width="0.4"/><line x1="64.5" y1="447.5" x2="73" y2="447.5" stroke="#111" stroke-width="1"/><polygon points="79.50,440.21 85.80,443.86 85.80,451.14 79.50,454.79 73.20,451.14 73.20,443.86" fill="#fbfbfb" stroke="#a89898" stroke-width="0.8" stroke-dasharray="1.2 0.8"/><polygon points="79.50,441.67 84.54,444.59 79.50,447.50 74.46,444.59" fill="#45b4dc" stroke="#5a8ea8" stroke-width="0.4"/><polygon points="74.46,444.59 79.50,447.50 79.50,453.33 74.46,450.41" fill="#0ea2d2" stroke="#5a8ea8" stroke-width="0.4"/><polygon points="84.54,444.59 79.50,447.50 79.50,453.33 84.54,450.41" fill="#0a86b4" stroke="#5a8ea8" stroke-width="0.4"/><path d="M421.5,441.0 H430.8 L434.5,444.7 V455.5 H421.5 Z" fill="#f4f4f4" stroke="#909090" stroke-width="1"/><line x1="423.52" y1="446.39" x2="432.48" y2="446.39" stroke="#1aa0c8" stroke-width="1.55"/><line x1="423.52" y1="449.49" x2="432.48" y2="449.49" stroke="#1aa0c8" stroke-width="1.55"/><line x1="423.52" y1="452.59" x2="432.48" y2="452.59" stroke="#1aa0c8" stroke-width="1.55"/><line x1="64.5" y1="461.5" x2="73" y2="461.5" stroke="#111" stroke-width="1"/><polygon points="80,455.1 85.76,461.5 80,467.9 74.24,461.5" fill="#1eaadc" stroke="#1a5a7a" stroke-width="0.7"/><polygon points="80,458.3 82.56,461.5 80,464.7 77.44,461.5" fill="#fff"/><polygon points="427.50,454.21 433.80,457.86 433.80,465.14 427.50,468.79 421.20,465.14 421.20,457.86" fill="#fbfbfb" stroke="#a89898" stroke-width="0.8" stroke-dasharray="1.2 0.8"/><polygon points="427.50,455.67 432.54,458.59 427.50,461.50 422.46,458.59" fill="#45b4dc" stroke="#5a8ea8" stroke-width="0.4"/><polygon points="422.46,458.59 427.50,461.50 427.50,467.33 422.46,464.41" fill="#0ea2d2" stroke="#5a8ea8" stroke-width="0.4"/><polygon points="432.54,458.59 427.50,461.50 427.50,467.33 432.54,464.41" fill="#0a86b4" stroke="#5a8ea8" stroke-width="0.4"/><line x1="64.5" y1="475.5" x2="73" y2="475.5" stroke="#111" stroke-width="1"/><polygon points="80,469.1 85.76,475.5 80,481.9 74.24,475.5" fill="#1eaadc" stroke="#1a5a7a" stroke-width="0.7"/><polygon points="80,472.3 82.56,475.5 80,478.7 77.44,475.5" fill="#fff"/><polygon points="427.50,468.21 433.80,471.86 433.80,479.14 427.50,482.79 421.20,479.14 421.20,471.86" fill="#fbfbfb" stroke="#a89898" stroke-width="0.8" stroke-dasharray="1.2 0.8"/><polygon points="427.50,469.67 432.54,472.59 427.50,475.50 422.46,472.59" fill="#45b4dc" stroke="#5a8ea8" stroke-width="0.4"/><polygon points="422.46,472.59 427.50,475.50 427.50,481.33 422.46,478.41" fill="#0ea2d2" stroke="#5a8ea8" stroke-width="0.4"/><polygon points="432.54,472.59 427.50,475.50 427.50,481.33 432.54,478.41" fill="#0a86b4" stroke="#5a8ea8" stroke-width="0.4"/><polygon points="75.50,534.10 88.90,541.85 88.90,557.35 75.50,565.10 62.10,557.35 62.10,541.85" fill="#fdfdfd" stroke="#8c8c8c" stroke-width="0.9"/><polygon points="75.50,537.98 85.55,543.79 75.50,549.60 65.45,543.79" fill="#45b4dc" stroke="#5a8ea8" stroke-width="0.7"/><polygon points="65.45,543.79 75.50,549.60 75.50,561.23 65.45,555.41" fill="#0ea2d2" stroke="#5a8ea8" stroke-width="0.7"/><polygon points="85.55,543.79 75.50,549.60 75.50,561.23 85.55,555.41" fill="#0a86b4" stroke="#5a8ea8" stroke-width="0.7"/><line x1="64.5" y1="568" x2="64.5" y2="581.0" stroke="#111" stroke-width="1"/><line x1="64.5" y1="580.5" x2="73" y2="580.5" stroke="#111" stroke-width="1"/><polygon points="79.50,573.22 85.80,576.86 85.80,584.14 79.50,587.78 73.20,584.14 73.20,576.86" fill="#fbfbfb" stroke="#a89898" stroke-width="0.8" stroke-dasharray="1.2 0.8"/><polygon points="79.50,574.67 84.54,577.59 79.50,580.50 74.46,577.59" fill="#45b4dc" stroke="#5a8ea8" stroke-width="0.4"/><polygon points="74.46,577.59 79.50,580.50 79.50,586.33 74.46,583.41" fill="#0ea2d2" stroke="#5a8ea8" stroke-width="0.4"/><polygon points="84.54,577.59 79.50,580.50 79.50,586.33 84.54,583.41" fill="#0a86b4" stroke="#5a8ea8" stroke-width="0.4"/><path d="M221.5,574.0 H230.1 L234.5,578.4 V588.5 H221.5 Z" fill="#e4e4e4" stroke="#6a6a6a" stroke-width="1.00"/><circle cx="228.0" cy="582.05" r="4.20" fill="#f4f4f4" stroke="#c81c1c" stroke-width="2.24"/><line x1="224.98" y1="585.07" x2="231.02" y2="579.03" stroke="#c81c1c" stroke-width="2.24"/><path d="M290.0,535.0 H306.3 L313.0,541.7 V565.0 H290.0 Z" fill="#f4f4f4" stroke="#909090" stroke-width="1"/><line x1="293.82" y1="546.28" x2="309.18" y2="546.28" stroke="#1aa0c8" stroke-width="3.10"/><line x1="293.82" y1="552.48" x2="309.18" y2="552.48" stroke="#1aa0c8" stroke-width="3.10"/><line x1="293.82" y1="558.68" x2="309.18" y2="558.68" stroke="#1aa0c8" stroke-width="3.10"/><line x1="290.5" y1="568" x2="290.5" y2="595.0" stroke="#111" stroke-width="1"/><line x1="290.5" y1="580.5" x2="299" y2="580.5" stroke="#111" stroke-width="1"/><polygon points="306,574.1 311.76,580.5 306,586.9 300.24,580.5" fill="#1eaadc" stroke="#1a5a7a" stroke-width="0.7"/><polygon points="306,577.3 308.56,580.5 306,583.7 303.44,580.5" fill="#fff"/><polygon points="429.50,573.22 435.80,576.86 435.80,584.14 429.50,587.78 423.20,584.14 423.20,576.86" fill="#fbfbfb" stroke="#a89898" stroke-width="0.8" stroke-dasharray="1.2 0.8"/><polygon points="429.50,574.67 434.54,577.59 429.50,580.50 424.46,577.59" fill="#45b4dc" stroke="#5a8ea8" stroke-width="0.4"/><polygon points="424.46,577.59 429.50,580.50 429.50,586.33 424.46,583.41" fill="#0ea2d2" stroke="#5a8ea8" stroke-width="0.4"/><polygon points="434.54,577.59 429.50,580.50 429.50,586.33 434.54,583.41" fill="#0a86b4" stroke="#5a8ea8" stroke-width="0.4"/><line x1="290.5" y1="594.5" x2="299" y2="594.5" stroke="#111" stroke-width="1"/><polygon points="306,588.1 311.76,594.5 306,600.9 300.24,594.5" fill="#1eaadc" stroke="#1a5a7a" stroke-width="0.7"/><polygon points="306,591.3 308.56,594.5 306,597.7 303.44,594.5" fill="#fff"/><polygon points="429.50,587.22 435.80,590.86 435.80,598.14 429.50,601.78 423.20,598.14 423.20,590.86" fill="#fbfbfb" stroke="#a89898" stroke-width="0.8" stroke-dasharray="1.2 0.8"/><polygon points="429.50,588.67 434.54,591.59 429.50,594.50 424.46,591.59" fill="#45b4dc" stroke="#5a8ea8" stroke-width="0.4"/><polygon points="424.46,591.59 429.50,594.50 429.50,600.33 424.46,597.41" fill="#0ea2d2" stroke="#5a8ea8" stroke-width="0.4"/><polygon points="434.54,591.59 429.50,594.50 429.50,600.33 434.54,597.41" fill="#0a86b4" stroke="#5a8ea8" stroke-width="0.4"/><path d="M467.5,533.5 H483.9 L492.5,542.1 V564.5 H467.5 Z" fill="#e4e4e4" stroke="#6a6a6a" stroke-width="1.56"/><circle cx="480.0" cy="549.8" r="7.80" fill="#f4f4f4" stroke="#c81c1c" stroke-width="4.16"/><line x1="474.38" y1="555.42" x2="485.62" y2="544.18" stroke="#c81c1c" stroke-width="4.16"/></svg>
<svg class="a" style="left:0;top:0" width="993" height="630"><defs><linearGradient id="tg" x1="0" y1="0" x2="0" y2="1"><stop offset="0" stop-color="#3cc0e8"/><stop offset="1" stop-color="#0a78a0"/></linearGradient><radialGradient id="sq" cx="0.5" cy="0.4" r="0.7"><stop offset="0" stop-color="#30b8e0"/><stop offset="1" stop-color="#0a6e94"/></radialGradient></defs><rect x="75" y="14.5" width="16" height="15.5" rx="3" fill="#9aa838" stroke="#6a7420"/><polygon points="83,16 89,19.3 89,26 83,29.3 77,26 77,19.3" fill="#f4f4f4"/><polygon points="83,17.3 88,20 83,22.7 78,20" fill="#5cc0e4"/><polygon points="78,20 83,22.7 83,28.2 78,25.4" fill="#14a0d0"/><polygon points="88,20 83,22.7 83,28.2 88,25.4" fill="#0a84b4"/><line x1="95.5" y1="37.5" x2="95.5" y2="59.5" stroke="#9a9a9a" stroke-width="1"/><line x1="139.5" y1="37.5" x2="139.5" y2="59.5" stroke="#9a9a9a" stroke-width="1"/><line x1="249.5" y1="37.5" x2="249.5" y2="59.5" stroke="#9a9a9a" stroke-width="1"/><line x1="326.5" y1="37.5" x2="326.5" y2="59.5" stroke="#9a9a9a" stroke-width="1"/><line x1="436.5" y1="37.5" x2="436.5" y2="59.5" stroke="#9a9a9a" stroke-width="1"/><line x1="480.5" y1="37.5" x2="480.5" y2="59.5" stroke="#9a9a9a" stroke-width="1"/><line x1="590.5" y1="37.5" x2="590.5" y2="59.5" stroke="#9a9a9a" stroke-width="1"/><circle cx="41" cy="48.7" r="11.3" fill="url(#tg)" stroke="#2a5a6a" stroke-width="0.9"/><path d="M41,41.5 V56 M33.8,48.7 H48.2" stroke="#fff" stroke-width="4" stroke-linecap="round"/><rect x="62.5" y="37.5" width="23" height="22.5" rx="2" fill="url(#sq)" stroke="#a09494" stroke-width="1.8"/><path d="M68,42.5 H80 L78.8,56 H69.2 Z" fill="#d4d4d4" stroke="#f4eeee" stroke-width="0.9"/><path d="M71.5,44 V54.5 M74,44 V54.5 M76.5,44 V54.5" stroke="#bdbdbd" stroke-width="0.8"/><rect x="106.5" y="37.5" width="23" height="22.5" rx="2" fill="url(#sq)" stroke="#a09494" stroke-width="1.8"/><path d="M111,48.7 L118,42.5 V46.5 H125.5 V51 H118 V55 Z" fill="#fff"/><path d="M155,38 L163,52 M168,38 L160,52" stroke="#777" stroke-width="1.6" fill="none"/><circle cx="156" cy="55" r="4" fill="#f0b090" stroke="#777" stroke-width="1.4"/><circle cx="167" cy="55" r="4" fill="#f0b090" stroke="#777" stroke-width="1.4"/><rect x="184.5" y="37.5" width="15" height="19" rx="2" fill="#ccc" stroke="#999"/><path d="M189.5,41.5 H201 L205.5,46 V60 H189.5 Z" fill="#e4e4e4" stroke="#999"/><path d="M192,47 H203 M192,50 H203 M192,53 H203 M192,56 H203" stroke="#aaa" stroke-width="1"/><rect x="218.5" y="40.5" width="20" height="19.5" rx="3" fill="#98a040" stroke="#707830"/><rect x="224" y="37" width="9" height="5" fill="#98a040" stroke="#707830"/><rect x="222" y="45" width="13" height="12" fill="#f2c8a8"/><path d="M222,48 H235 M222,51 H235 M222,54 H235" stroke="#d89070" stroke-width="1"/><path d="M275,38 L266,51 H271 L267,60 L280,45 H274.5 L279,38 Z" fill="#f8c020" stroke="#c08000" stroke-width="0.8"/><rect x="294.5" y="42.5" width="20" height="18" rx="3" fill="#444" stroke="#222"/><text x="296" y="57" font-family="Liberation Sans" font-weight="bold" font-size="11" fill="#fff">Se</text><path d="M306,50 L315,40 L317,42 L308,52 Z" fill="#f0c040" stroke="#555" stroke-width="0.6"/><polygon points="347.27,37.13 348.42,37.01 349.58,37.01 350.73,37.13 351.09,40.46 351.90,40.70 352.68,41.03 353.42,41.42 356.03,39.32 356.92,40.06 357.74,40.88 358.48,41.77 356.38,44.38 356.77,45.12 357.10,45.90 357.34,46.71 360.67,47.07 360.79,48.22 360.79,49.38 360.67,50.53 357.34,50.89 357.10,51.70 356.77,52.48 356.38,53.22 358.48,55.83 357.74,56.72 356.92,57.54 356.03,58.28 353.42,56.18 352.68,56.57 351.90,56.90 351.09,57.14 350.73,60.47 349.58,60.59 348.42,60.59 347.27,60.47 346.91,57.14 346.10,56.90 345.32,56.57 344.58,56.18 341.97,58.28 341.08,57.54 340.26,56.72 339.52,55.83 341.62,53.22 341.23,52.48 340.90,51.70 340.66,50.89 337.33,50.53 337.21,49.38 337.21,48.22 337.33,47.07 340.66,46.71 340.90,45.90 341.23,45.12 341.62,44.38 339.52,41.77 340.26,40.88 341.08,40.06 341.97,39.32 344.58,41.42 345.32,41.03 346.10,40.70 346.91,40.46" fill="#1a9cc8" stroke="#157aa0" stroke-width="0.6" stroke-linejoin="round"/><circle cx="349" cy="48.8" r="5.2" fill="none" stroke="#c8eaf6" stroke-width="1"/><circle cx="349" cy="48.8" r="2.8" fill="none" stroke="#c8eaf6" stroke-width="0.9"/><circle cx="349" cy="48.8" r="1" fill="#e8f6fc"/><rect x="370.5" y="37.5" width="23" height="23" rx="4" fill="#8e9a34" stroke="#6a7228"/><polygon points="382,39.5 392,45 392,55.5 382,60 372,55.5 372,45" fill="#f0f0f0"/><polygon points="382,42 389.5,46 382,50 374.5,46" fill="#5cc4e6"/><polygon points="374.5,46 382,50 382,58 374.5,54" fill="#12a0d0"/><polygon points="389.5,46 382,50 382,58 389.5,54" fill="#c4ced4"/><path d="M383,51.5 H389 M383,54 H389 M383,56.5 H388" stroke="#9aa8b0" stroke-width="0.7"/><path d="M416,42.5 C423,40.5 427.5,44 426.5,49 C425.5,53 421,55 417.5,54" fill="none" stroke="#1a9cc8" stroke-width="3.4"/><polygon points="409.5,43 418.5,37 418.5,48.5" fill="#1a9cc8"/><circle cx="410.5" cy="55.5" r="5" fill="#f0a070" stroke="#4a4a4a" stroke-width="2"/><rect x="449.5" y="42.5" width="5" height="5" fill="#fff" stroke="#777"/><rect x="449.5" y="51.5" width="5" height="5" fill="#eee" stroke="#777"/><rect x="451" y="44" width="2" height="2" fill="#555"/><path d="M457,45 H469.5 M457,54 H469.5" stroke="#666" stroke-width="1.8"/><line x1="505.5" y1="50.5" x2="511.5" y2="56.5" stroke="#7a4a2a" stroke-width="3.5" stroke-linecap="round"/><line x1="505.5" y1="50.5" x2="511.5" y2="56.5" stroke="#e0a070" stroke-width="2" stroke-linecap="round"/><circle cx="500.5" cy="45.5" r="6.5" fill="#c8c8e0" stroke="#303070" stroke-width="1.4"/><line x1="537.5" y1="50.5" x2="543.5" y2="56.5" stroke="#7a4a2a" stroke-width="3.5" stroke-linecap="round"/><line x1="537.5" y1="50.5" x2="543.5" y2="56.5" stroke="#e0a070" stroke-width="2" stroke-linecap="round"/><circle cx="532.5" cy="45.5" r="6.5" fill="#c8c8e0" stroke="#303070" stroke-width="1.4"/><path d="M528.5,45.5 H536.5 M532.5,41.5 V49.5" stroke="#111" stroke-width="1.8"/><line x1="570.5" y1="50.5" x2="576.5" y2="56.5" stroke="#7a4a2a" stroke-width="3.5" stroke-linecap="round"/><line x1="570.5" y1="50.5" x2="576.5" y2="56.5" stroke="#e0a070" stroke-width="2" stroke-linecap="round"/><circle cx="565.5" cy="45.5" r="6.5" fill="#c8c8e0" stroke="#303070" stroke-width="1.4"/><path d="M561.5,45.5 H569.5" stroke="#111" stroke-width="1.8"/><path d="M603,47 L612,43 L619,46 V55 L610,59 L603,56 Z" fill="#e4e4e4" stroke="#bbb"/><ellipse cx="607" cy="45" rx="3" ry="1.6" fill="#ddd" stroke="#bbb"/><ellipse cx="613" cy="43.5" rx="3" ry="1.6" fill="#ddd" stroke="#bbb"/><path d="M613,54 H619 V51 L624,55 L619,59 V57 H613 Z" fill="#1a98c8"/><rect x="977.5" y="37.5" width="12" height="23" rx="3" fill="#e8e8e8" stroke="#888"/><path d="M982.5,45.5 L979.5,49 L982.5,52.5 M984.5,45.5 L986.5,49" stroke="#20a0c0" stroke-width="1.8" fill="none"/><ellipse cx="35.5" cy="21.5" rx="7.3" ry="7.6" fill="#dcdcdc" transform="rotate(20 35.5 21.5)"/><g stroke="#1f4d5e" stroke-width="1.5" stroke-linecap="round"><line x1="35.97" y1="19.76" x2="36.95" y2="16.09"/><line x1="37.24" y1="21.03" x2="40.91" y2="20.05"/><line x1="36.77" y1="22.77" x2="39.46" y2="25.46"/><line x1="35.03" y1="23.24" x2="34.05" y2="26.91"/><line x1="33.76" y1="21.97" x2="30.09" y2="22.95"/><line x1="34.23" y1="20.23" x2="31.54" y2="17.54"/></g><circle cx="35.5" cy="21.5" r="1" fill="#1f4d5e"/><path d="M209.5,18.5 L218,26.5 M218,18.5 L209.5,26.5" stroke="#2a4a8a" stroke-width="2.2"/><path d="M197.5,18 V27 M193.5,22.5 H201.5 M194.5,19.5 L200.5,25.5 M200.5,19.5 L194.5,25.5" stroke="#c07020" stroke-width="1"/></svg>
<div class="t" style="left:95px;top:15.50px;font-size:12px;line-height:13.80px;color:#111;transform:scaleX(0.8628);-webkit-text-stroke:0.2px #111;">WebServicesModel</div>
<div class="a" style="left:688px;top:66px;width:17px;height:548px;background:#f0f0f0;"></div>
<div class="a" style="left:688px;top:66px;width:17px;height:548px;background:linear-gradient(90deg,#ececec,#f6f6f6 40%,#e8e8e8);"></div>
<div class="a" style="left:689px;top:84px;width:14px;height:499px;border:1px solid #8c8c8c;border-radius:3px;box-sizing:border-box;background:linear-gradient(90deg,#f6f6f6,#ececec 45%,#d0d0d4 75%,#c0c0c6);"></div>
<div class="a" style="left:966px;top:66px;width:17px;height:548px;background:linear-gradient(90deg,#ececec,#f6f6f6 40%,#e8e8e8);"></div>
<div class="a" style="left:967px;top:84px;width:14px;height:499px;border:1px solid #8c8c8c;border-radius:3px;box-sizing:border-box;background:linear-gradient(90deg,#f6f6f6,#ececec 45%,#d0d0d4 75%,#c0c0c6);"></div>
<div class="a" style="left:983px;top:66px;width:2px;height:548px;background:#f0f0f0;"></div>
<svg class="a" style="left:0;top:0" width="993" height="630"><line x1="688.5" y1="66" x2="688.5" y2="614" stroke="#a8a8a8"/><line x1="704.5" y1="66" x2="704.5" y2="614" stroke="#b8b8b8"/><polygon points="692.0,77.5 701.0,77.5 696.5,72.5" fill="#333"/><polygon points="692.0,603.5 701.0,603.5 696.5,608.5" fill="#333"/><line x1="693.0" y1="331.5" x2="700.0" y2="331.5" stroke="#333" stroke-width="1.2"/><line x1="693.0" y1="334.5" x2="700.0" y2="334.5" stroke="#333" stroke-width="1.2"/><line x1="693.0" y1="337.5" x2="700.0" y2="337.5" stroke="#333" stroke-width="1.2"/><line x1="966.5" y1="66" x2="966.5" y2="614" stroke="#a8a8a8"/><line x1="982.5" y1="66" x2="982.5" y2="614" stroke="#b8b8b8"/><polygon points="970.0,77.5 979.0,77.5 974.5,72.5" fill="#333"/><polygon points="970.0,603.5 979.0,603.5 974.5,608.5" fill="#333"/><line x1="971.0" y1="331.5" x2="978.0" y2="331.5" stroke="#333" stroke-width="1.2"/><line x1="971.0" y1="334.5" x2="978.0" y2="334.5" stroke="#333" stroke-width="1.2"/><line x1="971.0" y1="337.5" x2="978.0" y2="337.5" stroke="#333" stroke-width="1.2"/></svg>
<div class="a" style="left:705px;top:66px;width:260px;height:20px;background:linear-gradient(#a5d1f9 0%,#93c0ec 50%,#7ba7d5 100%);"></div>
<div class="t" style="left:738.3px;top:70.19px;font-size:11.5px;line-height:13.22px;color:#111;transform:scaleX(0.9541);-webkit-text-stroke:0.2px #111;">Step Information</div>
<div class="t" style="left:729.0px;top:96.25px;font-size:10px;line-height:11.50px;color:#111;transform:scaleX(0.9371);-webkit-text-stroke:0.2px #111;">Name:</div>
<div class="a" style="left:761px;top:92px;width:176px;height:18px;background:#fff;border:1px solid #a4a4a4;box-sizing:border-box;"></div>
<div class="t" style="left:765px;top:96.25px;font-size:10px;line-height:11.50px;color:#111;transform:scaleX(0.9190);-webkit-text-stroke:0.2px #111;">Virtual HTTPS Listener 8001</div>
<div class="t" style="left:710.6px;top:118.25px;font-size:10px;line-height:11.50px;color:#111;transform:scaleX(0.9407);-webkit-text-stroke:0.2px #111;">Think time:</div>
<div class="a" style="left:761px;top:114px;width:46px;height:18px;background:#fff;border:1px solid #a4a4a4;box-sizing:border-box;"></div>
<div class="t" style="left:765px;top:118.25px;font-size:10px;line-height:11.50px;color:#111;transform:scaleX(1.0000);-webkit-text-stroke:0.2px #111;">0</div>
<div class="a" style="left:811px;top:114px;width:64px;height:18px;background:linear-gradient(#f4f4f4,#e6e6e6 50%,#d6d6d6);border:1px solid #a0a0a0;border-radius:2px;box-sizing:border-box;"></div>
<div class="t" style="left:815.6px;top:117.75px;font-size:10px;line-height:11.50px;color:#111;transform:scaleX(0.9452);-webkit-text-stroke:0.2px #111;">millis</div>
<div class="t" style="left:743.0px;top:140.25px;font-size:10px;line-height:11.50px;color:#111;transform:scaleX(1.0196);-webkit-text-stroke:0.2px #111;">To:</div>
<div class="a" style="left:761px;top:136px;width:46px;height:18px;background:#fff;border:1px solid #a4a4a4;box-sizing:border-box;"></div>
<div class="a" style="left:811px;top:136px;width:64px;height:18px;background:linear-gradient(#f4f4f4,#e6e6e6 50%,#d6d6d6);border:1px solid #a0a0a0;border-radius:2px;box-sizing:border-box;"></div>
<div class="t" style="left:815.6px;top:139.75px;font-size:10px;line-height:11.50px;color:#111;transform:scaleX(0.9452);-webkit-text-stroke:0.2px #111;">millis</div>
<div class="a" style="left:763px;top:160.5px;width:13px;height:13px;background:linear-gradient(#dfe6f0,#f4f6fa);border:1px solid #8a8a8a;box-sizing:border-box;"></div>
<div class="t" style="left:780.3px;top:162.25px;font-size:10px;line-height:11.50px;color:#111;transform:scaleX(0.9118);-webkit-text-stroke:0.2px #111;">Use global filters</div>
<div class="a" style="left:860px;top:160.5px;width:13px;height:13px;background:linear-gradient(#dfe6f0,#f4f6fa);border:1px solid #8a8a8a;box-sizing:border-box;"></div>
<div class="t" style="left:877px;top:162.25px;font-size:10px;line-height:11.50px;color:#111;transform:scaleX(0.9623);-webkit-text-stroke:0.2px #111;">Quiet</div>
<div class="t" style="left:709.3000000000001px;top:184.25px;font-size:10px;line-height:11.50px;color:#111;transform:scaleX(0.8957);-webkit-text-stroke:0.2px #111;">Execute on:</div>
<div class="a" style="left:761px;top:179px;width:200px;height:20px;background:#fff;border:1px solid #a4a4a4;box-sizing:border-box;"></div>
<div class="t" style="left:764px;top:185.47px;font-size:7px;line-height:8.05px;color:#111;transform:scaleX(0.9725);-webkit-text-stroke:0.2px #111;">local</div>
<div class="t" style="left:735.2px;top:208.25px;font-size:10px;line-height:11.50px;color:#111;transform:scaleX(0.9169);-webkit-text-stroke:0.2px #111;">Next:</div>
<div class="a" style="left:761px;top:203px;width:200px;height:20px;background:#fff;border:1px solid #a0a0a0;border-radius:2px;box-sizing:border-box;"></div>
<div class="a" style="left:941px;top:205px;width:18px;height:16px;background:linear-gradient(#f4f4f4,#dcdcdc);"></div>
<div class="t" style="left:765.7px;top:208.25px;font-size:10px;line-height:11.50px;color:#111;transform:scaleX(0.9271);-webkit-text-stroke:0.2px #111;">Virtual Service Router</div>
<div class="a" style="left:705px;top:229px;width:260px;height:20px;background:linear-gradient(#a5d1f9 0%,#93c0ec 50%,#7ba7d5 100%);"></div>
<div class="t" style="left:738.3px;top:233.19px;font-size:11.5px;line-height:13.22px;color:#111;transform:scaleX(0.8957);-webkit-text-stroke:0.2px #111;">Virtual HTTP/S Listener</div>
<div class="a" style="left:705px;top:249px;width:260px;height:20px;background:linear-gradient(#a5d1f9 0%,#93c0ec 50%,#7ba7d5 100%);"></div>
<div class="t" style="left:738.3px;top:253.19px;font-size:11.5px;line-height:13.22px;color:#111;transform:scaleX(0.8980);-webkit-text-stroke:0.2px #111;">Log Message</div>
<div class="a" style="left:705px;top:269px;width:260px;height:20px;background:linear-gradient(#a5d1f9 0%,#93c0ec 50%,#7ba7d5 100%);"></div>
<div class="t" style="left:738.3px;top:273.19px;font-size:11.5px;line-height:13.22px;color:#111;transform:scaleX(0.9276);-webkit-text-stroke:0.2px #111;">Assertions</div>
<div class="a" style="left:709px;top:293px;width:252px;height:162px;background:#f0f0f0;border:1px solid #a8a8a8;box-sizing:border-box;"></div>
<div class="a" style="left:710px;top:294px;width:250px;height:12.5px;background:#3d94f6;"></div>
<div class="t" style="left:723.6px;top:294.84px;font-size:9.5px;line-height:10.92px;color:#fff;transform:scaleX(0.9540);-webkit-text-stroke:0.2px #fff;">Ensure Result Contains String</div>
<div class="t" style="left:714.6px;top:314.55px;font-size:10px;line-height:11.50px;color:#111;transform:scaleX(0.9303);-webkit-text-stroke:0.2px #111;">Name:</div>
<div class="a" style="left:746px;top:309px;width:206px;height:20px;background:#fff;border:1px solid #a4a4a4;box-sizing:border-box;"></div>
<div class="t" style="left:749.6px;top:314.25px;font-size:10px;line-height:11.50px;color:#111;transform:scaleX(0.9033);-webkit-text-stroke:0.2px #111;">Ensure Result Contains String</div>
<div class="t" style="left:735.2px;top:337.75px;font-size:10px;line-height:11.50px;color:#111;transform:scaleX(1.2238);-webkit-text-stroke:0.2px #111;">If</div>
<div class="a" style="left:746px;top:333px;width:210px;height:18px;background:linear-gradient(#f4f4f4,#e6e6e6 50%,#d6d6d6);border:1px solid #a0a0a0;border-radius:2px;box-sizing:border-box;"></div>
<div class="t" style="left:750.7px;top:337.25px;font-size:10px;line-height:11.50px;color:#111;transform:scaleX(0.9064);-webkit-text-stroke:0.2px #111;">True</div>
<div class="t" style="left:724.3px;top:360.55px;font-size:10px;line-height:11.50px;color:#111;transform:scaleX(0.9095);-webkit-text-stroke:0.2px #111;">then</div>
<div class="a" style="left:746px;top:355px;width:210px;height:19px;background:linear-gradient(#f4f4f4,#e6e6e6 50%,#d6d6d6);border:1px solid #a0a0a0;border-radius:2px;box-sizing:border-box;"></div>
<div class="t" style="left:750px;top:360.25px;font-size:10px;line-height:11.50px;color:#111;transform:scaleX(0.9793);-webkit-text-stroke:0.2px #111;">Go To: Virtual HTTPS Live Invocation {{L...</div>
<div class="t" style="left:725px;top:383.85px;font-size:10px;line-height:11.50px;color:#111;transform:scaleX(0.8735);-webkit-text-stroke:0.2px #111;">Log:</div>
<div class="a" style="left:746px;top:379px;width:210px;height:18px;background:#fff;border:1px solid #a4a4a4;box-sizing:border-box;"></div>
<div class="a" style="left:788px;top:402px;width:86px;height:19px;background:linear-gradient(#fafafa,#e8e8e8 50%,#d8d8d8);border:1px solid #8a8a8a;border-radius:3px;box-sizing:border-box;"></div>
<div class="t" style="left:803.3px;top:406.95px;font-size:10px;line-height:11.50px;color:#111;transform:scaleX(0.9092);-webkit-text-stroke:0.2px #111;">Run Assertion</div>
<div class="t" style="left:710.3px;top:426.44px;font-size:11.4px;line-height:13.11px;font-weight:bold;color:#6c6c70;transform:scaleX(1.0039);-webkit-text-stroke:0.2px #6c6c70;">Contains String:</div>
<div class="a" style="left:803px;top:422px;width:157px;height:20px;background:#fff;border:1px solid #a4a4a4;box-sizing:border-box;"></div>
<div class="t" style="left:806px;top:427.25px;font-size:10px;line-height:11.50px;color:#111;transform:scaleX(1.0982);-webkit-text-stroke:0.2px #111;">test</div>
<div class="a" style="left:824px;top:425px;width:1px;height:14px;background:#000;"></div>
<div class="a" style="left:710px;top:442px;width:250px;height:12px;background:#e6eef8;"></div>
<div class="t" style="left:723px;top:443.05px;font-size:10px;line-height:11.50px;color:#111;transform:scaleX(0.9548);-webkit-text-stroke:0.2px #111;">If being efficient</div>
<div class="a" style="left:705px;top:477px;width:260px;height:20px;background:linear-gradient(#a5d1f9 0%,#93c0ec 50%,#7ba7d5 100%);"></div>
<div class="t" style="left:738.3px;top:481.19px;font-size:11.5px;line-height:13.22px;color:#111;transform:scaleX(0.9488);-webkit-text-stroke:0.2px #111;">Filters</div>
<div class="a" style="left:705px;top:497px;width:260px;height:20px;background:linear-gradient(#a5d1f9 0%,#93c0ec 50%,#7ba7d5 100%);"></div>
<div class="t" style="left:738.3px;top:501.19px;font-size:11.5px;line-height:13.22px;color:#111;transform:scaleX(0.9347);-webkit-text-stroke:0.2px #111;">Data Sets</div>
<div class="a" style="left:705px;top:517px;width:260px;height:20px;background:linear-gradient(#a5d1f9 0%,#93c0ec 50%,#7ba7d5 100%);"></div>
<div class="t" style="left:738.3px;top:521.19px;font-size:11.5px;line-height:13.22px;color:#111;transform:scaleX(0.9430);-webkit-text-stroke:0.2px #111;">Properties Referenced</div>
<div class="a" style="left:705px;top:537px;width:260px;height:20px;background:linear-gradient(#a5d1f9 0%,#93c0ec 50%,#7ba7d5 100%);"></div>
<div class="t" style="left:738.3px;top:541.19px;font-size:11.5px;line-height:13.22px;color:#111;transform:scaleX(0.9456);-webkit-text-stroke:0.2px #111;">Properties Set</div>
<div class="a" style="left:705px;top:557px;width:260px;height:20px;background:linear-gradient(#a5d1f9 0%,#93c0ec 50%,#7ba7d5 100%);"></div>
<div class="t" style="left:738.3px;top:561.19px;font-size:11.5px;line-height:13.22px;color:#111;transform:scaleX(0.9742);-webkit-text-stroke:0.2px #111;">Extra Information</div>
<div class="a" style="left:705px;top:577px;width:260px;height:20px;background:linear-gradient(#a5d1f9 0%,#93c0ec 50%,#7ba7d5 100%);"></div>
<div class="t" style="left:738.3px;top:581.19px;font-size:11.5px;line-height:13.22px;color:#111;transform:scaleX(0.9348);-webkit-text-stroke:0.2px #111;">Documentation</div>
<div class="a" style="left:709px;top:603px;width:252px;height:14px;background:#fff;border:1px solid #a4a4a4;box-sizing:border-box;"></div>
<svg class="a" style="left:0;top:0" width="993" height="630"><polygon points="707.5,73 716,73 711.75,79" fill="#000"/><path d="M721.0,69.0 H729.6 L733.0,72.4 V83.5 H721.0 Z" fill="#f4f4f4" stroke="#909090" stroke-width="1"/><line x1="722.84" y1="74.39" x2="731.16" y2="74.39" stroke="#1aa0c8" stroke-width="1.55"/><line x1="722.84" y1="77.49" x2="731.16" y2="77.49" stroke="#1aa0c8" stroke-width="1.55"/><line x1="722.84" y1="80.59" x2="731.16" y2="80.59" stroke="#1aa0c8" stroke-width="1.55"/><path d="M945,99 L950,95 L950,98 C956,98 959,102 957,106 C956,108 954,109 952,110 C954,107 954,103 950,102 L950,105 Z" fill="#f0a020" stroke="#d08010" stroke-width="0.6"/><polygon points="860.5,123.5 869.5,123.5 865,128.0" fill="#000"/><polygon points="860.5,145.5 869.5,145.5 865,150.0" fill="#000"/><path d="M766.5,167.0 L768.5,171.0 L772.5,163.0" stroke="#3040a0" stroke-width="1.3" fill="none"/><path d="M863.5,167.0 L865.5,171.0 L869.5,163.0" stroke="#3040a0" stroke-width="1.3" fill="none"/><polygon points="947,188 956,188 951.5,192.5" fill="#000"/><polygon points="947,212.5 956,212.5 951.5,217" fill="#000"/><polygon points="709,234.5 714.5,239 709,243.5" fill="#000"/><polygon points="727.00,232.18 732.90,235.59 732.90,242.41 727.00,245.82 721.10,242.41 721.10,235.59" fill="#fdfdfd" stroke="#8c8c8c" stroke-width="0.9"/><polygon points="727.00,233.88 731.42,236.44 727.00,239.00 722.58,236.44" fill="#45b4dc" stroke="#5a8ea8" stroke-width="0.7"/><polygon points="722.58,236.44 727.00,239.00 727.00,244.12 722.58,241.56" fill="#0ea2d2" stroke="#5a8ea8" stroke-width="0.7"/><polygon points="731.42,236.44 727.00,239.00 727.00,244.12 731.42,241.56" fill="#0a86b4" stroke="#5a8ea8" stroke-width="0.7"/><polygon points="709,254.5 714.5,259 709,263.5" fill="#000"/><rect x="720.5" y="252.5" width="12" height="14" rx="2.5" fill="#c8c8e8" stroke="#333" stroke-width="1.2"/><path d="M723,256.5 H730 M723,259.5 H730 M723,262.5 H730" stroke="#666" stroke-width="0.8"/><polygon points="707.5,276 716,276 711.75,282" fill="#000"/><polygon points="727,272 733.3,279 727,286 720.7,279" fill="#1eaadc" stroke="#1a5a7a" stroke-width="0.7"/><polygon points="727,275.5 729.8,279 727,282.5 724.2,279" fill="#fff"/><polygon points="712.5,297 720,297 716.25,302.5" fill="#000"/><polygon points="941.5,342.5 950.5,342.5 946,347.0" fill="#000"/><polygon points="941.5,365.0 950.5,365.0 946,369.5" fill="#000"/><polygon points="714,444.5 719,448.5 714,452.5" fill="#000"/><path d="M788,459.5 V468.5 M783.5,464 H792.5" stroke="#000" stroke-width="2.8"/><path d="M811.5,460 V469 M809.5,462.5 L811.5,459.5 L813.5,462.5" stroke="#888" stroke-width="1" fill="none"/><path d="M834,459.5 V468.5 M832,465.5 L834,468.5 L836,465.5" stroke="#000" stroke-width="1.2" fill="none"/><path d="M854,468 H863 M855,467 L861,461 L863,463 L857,468" stroke="#666" stroke-width="1" fill="none"/><path d="M879,460.5 L885.5,468 M885.5,460.5 L879,468" stroke="#000" stroke-width="2"/><polygon points="709,482.5 714.5,487 709,491.5" fill="#000"/><rect x="719" y="481" width="15.5" height="12.5" rx="2.5" fill="#c8c8c8" stroke="#777" stroke-width="0.8"/><rect x="728" y="481.5" width="6" height="11.5" fill="#8a8a20"/><path d="M721,487.2 H729 M726.5,484 L730,487.2 L726.5,490.5" stroke="#fff" stroke-width="2" fill="none"/><polygon points="709,502.5 714.5,507 709,511.5" fill="#000"/><path d="M720,510 H733 L732,514 H721 Z" fill="#ccc" stroke="#888" stroke-width="0.8"/><path d="M721,501 C726,499 730,502 728,507" stroke="#1a9ac8" stroke-width="2.4" fill="none"/><path d="M724.5,506 L728,510 L731,505.5 Z" fill="#1a9ac8"/><polygon points="709,522.5 714.5,527 709,531.5" fill="#000"/><rect x="720.5" y="520.5" width="5" height="5" fill="#fff" stroke="#333"/><rect x="720.5" y="528.5" width="5" height="5" fill="#fff" stroke="#777"/><path d="M721.5,522.5 L723,524 L725,520" stroke="#000" stroke-width="1" fill="none"/><path d="M727,523 H734 M727,531 H734" stroke="#6a6aa0" stroke-width="1.6"/><polygon points="709,542.5 714.5,547 709,551.5" fill="#000"/><rect x="720.5" y="540.5" width="5" height="5" fill="#fff" stroke="#333"/><rect x="720.5" y="548.5" width="5" height="5" fill="#fff" stroke="#777"/><path d="M721.5,542.5 L723,544 L725,540" stroke="#000" stroke-width="1" fill="none"/><path d="M727,543 H734 M727,551 H734" stroke="#6a6aa0" stroke-width="1.6"/><polygon points="709,562.5 714.5,567 709,571.5" fill="#000"/><circle cx="727" cy="567" r="7" fill="#d0c8e0" stroke="#444" stroke-width="1.2"/><path d="M727,562 V571 M724,571 H730" stroke="#555" stroke-width="1.4"/><polygon points="707.5,584 716,584 711.75,590" fill="#000"/><path d="M720.5,580.5 H733.5 V590 L730,593.5 H720.5 Z" fill="#fff" stroke="#2a3a6a" stroke-width="1.3"/><rect x="720" y="580" width="14" height="2.5" fill="#2a3a6a"/></svg>
<svg class="a" style="left:0;top:0;mix-blend-mode:multiply" width="993" height="630"><path d="M95,97 C97,93 101,91 104.5,90 L105,88 L116,88 L116,91 C150,93 220,98 290,102.5 L290,120 C250,124 200,130 153,130.8 C125,130 103,127 95,121 Z" fill="#ffff00"/><path d="M712,287.5 C760,286 820,286 871,286.5 L871,302 C820,302 760,302.5 712,302.5 Z" fill="#ffff00"/><path d="M730,339 C745,337.5 770,337.5 789,338 L789.5,354 C765,354.5 745,354.5 730,354 Z" fill="#ffff00"/><path d="M723,358.5 C800,357 880,357 941,357.5 L942,374.5 C860,375 790,375 723,374.5 Z" fill="#ffff00"/><path d="M787,427 C810,425 840,424 864,425 L865,442 C840,444 810,445 787,444 Z" fill="#ffff00"/></svg>
<div class="a" style="left:985px;top:0px;width:8px;height:630px;background:#000;"></div>
<div class="a" style="left:0px;top:614px;width:993px;height:16px;background:#000;"></div>
<div class="a" style="left:0px;top:0px;width:17px;height:630px;background:#000;"></div>
<div class="a" style="left:0px;top:0px;width:993px;height:9px;background:#000;"></div>
</div></body></html>
